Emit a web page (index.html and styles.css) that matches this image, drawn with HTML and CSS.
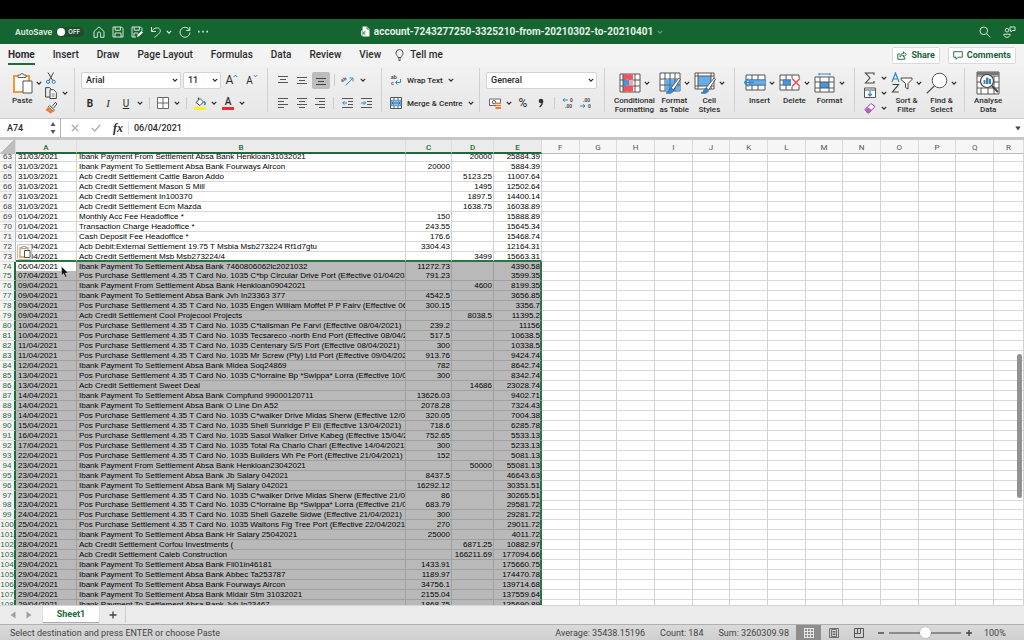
FILE: index.html
```html
<!DOCTYPE html>
<html lang="en">
<head>
<meta charset="utf-8">
<meta name="viewport" content="width=device-width, initial-scale=1">
<title>account-7243277250-3325210-from-20210302-to-20210401</title>
<link rel="stylesheet" href="styles.css">
</head>
<body>
<svg class="defs" aria-hidden="true">
  <symbol id="chev" viewBox="0 0 6 4"><path d="M.8.8 3 3.1 5.2.8" fill="none" stroke="currentColor" stroke-width="1.2"/></symbol>
  <symbol id="table" viewBox="0 0 22 20"><path d="M1 1h20v18H1z" fill="#fff"/><path d="M1 1h20v18H1zM1 7h20M1 13h20M6 1v18M11 1v18M16 1v18" fill="none" stroke="#555"/></symbol>
</svg>
<div class="topgap"></div>
<header class="titlebar">
  <div class="quick">
    <label class="autosave">AutoSave <input type="checkbox" class="hidden-box"><span class="switch"><i></i>OFF</span></label>
    <button aria-label="Home"><svg width="12" height="12" viewBox="0 0 12 12"><path d="M1 5.5 6 .8l5 4.7V11.300H7.600V7.500a1.600 1.600 0 0 0-3.200 0v3.800H1z"/></svg></button>
    <button aria-label="Save"><svg width="12" height="12" viewBox="0 0 12 12"><path d="M1 1h8.500L11 2.500V11H1zM3.200 1v3.200h5.200V1M3 11V7h6v4"/></svg></button>
    <button aria-label="Save as"><svg width="12" height="12" viewBox="0 0 12 12"><path d="M5 11H1V1h8.500L11 2.500V5M3.200 1v3.200h5.200V1M3 11V7h4"/><path d="m6 11 .6-2.500 4-3.500 1.400 1.600-4 3.700z" fill="#fff" stroke="none"/></svg></button>
    <button aria-label="Undo" class="undo"><svg width="12" height="12" viewBox="0 0 12 12"><path d="M1.500 1v4.500H6M1.500 5.500C4 1.500 8.500.8 10 3.500S8 8.500 4.500 11.500"/></svg><svg class="chev"><use href="#chev"/></svg></button>
    <button aria-label="Redo"><svg width="12" height="12" viewBox="0 0 12 12"><path d="M10.800 1v3.500H7.300M10.600 4.300A5 5 0 1 0 11 6.500"/></svg></button>
    <button aria-label="More"><svg class="dots" width="10" height="3" viewBox="0 0 10 3"><path d="M0 .8h1.600v1.600H0zM4.200.8h1.600v1.600H4.200zM8.400.8H10v1.600H8.400z"/></svg></button>
  </div>
  <h1><svg width="9" height="11" viewBox="0 0 9 11"><path d="M1.500.5h4.500l2.500 2.500v7.500h-7z" fill="#fff"/><path d="M0 4.500h5v5H0z" fill="#cfe3d6"/><path d="m1.200 5.500 2.600 3M3.800 5.500l-2.600 3M6 .5V3h2.500" stroke="#14682f" fill="none" stroke-width=".8"/></svg>account-7243277250-3325210-from-20210302-to-20210401<svg class="chev dim"><use href="#chev"/></svg></h1>
  <div class="right">
    <button aria-label="Search"><svg width="12" height="12" viewBox="0 0 12 12"><circle cx="4.800" cy="4.800" r="3.800"/><path d="m7.600 7.600 3.800 3.800"/></svg></button>
    <button aria-label="Share presence"><svg width="13" height="12" viewBox="0 0 13 12"><circle cx="4" cy="4.200" r="1.800"/><path d="M.8 8.200h6.400c0 4.200-6.400 4.200-6.400 0zM7 1h5v3.500H9.500L8 6V4.500H7z"/></svg></button>
  </div>
</header>
<nav class="tabs">
  <a href="#" class="on">Home</a><a href="#">Insert</a><a href="#">Draw</a><a href="#">Page Layout</a><a href="#">Formulas</a><a href="#">Data</a><a href="#">Review</a><a href="#">View</a>
  <a href="#" class="tell"><svg width="9" height="12" viewBox="0 0 9 12"><path d="M3 8.500C3 7 1 6.500 1 4a3.500 3.500 0 0 1 7 0c0 2.500-2 3-2 4.500zM3 10h3M3.500 11.500h2" fill="none" stroke="#444" stroke-width=".9"/></svg>Tell me</a>
  <div class="actions">
    <button class="share"><svg width="10" height="9" viewBox="0 0 10 9"><path d="M3 3H.8v5.300h7V6M3 6c0-2.500 1.500-3.500 3.500-3.500V.8L9.300 3.400 6.500 6V4.300C5 4.300 4 4.800 3 6z" fill="none" stroke="currentColor" stroke-width=".9"/></svg>Share</button>
    <button class="share"><svg width="10" height="9" viewBox="0 0 10 9"><path d="M.7.7h8.600v5.500H5L3 8.300V6.200H.7z" fill="none" stroke="currentColor" stroke-width=".9"/></svg>Comments</button>
  </div>
</nav>
<section class="ribbon" aria-label="Home ribbon">
  <div class="group clip">
    <button class="big paste"><span class="pic"><svg width="21" height="22" viewBox="0 0 21 22"><path d="M2 4h15v16H2z" fill="#fdfdfd" stroke="#eb9a3c" stroke-width="2"/><path d="M6 5V3h2.500a1.500 1.500 0 0 1 3 0H14v2.500H6z" fill="#fff" stroke="#666"/><path d="M11 9h9v12h-9z" fill="#fff" stroke="#555"/></svg><svg class="chev"><use href="#chev"/></svg></span>Paste</button>
    <div class="stack">
      <button aria-label="Cut"><svg width="12" height="12" viewBox="0 0 12 12" fill="none"><path d="M3 .5 8 9M8.500.5 3.800 9" stroke="#444"/><circle cx="3" cy="9.800" r="1.600" stroke="#2f86c9"/><circle cx="8.700" cy="9.800" r="1.600" stroke="#2f86c9"/></svg></button>
      <button aria-label="Copy"><svg width="12" height="12" viewBox="0 0 12 12"><path d="M5 10H.6V.6h4l1.500 1.500" fill="none" stroke="#444"/><path d="M5 2.700h3.500l2.800 2.800v6H5z" fill="#fff" stroke="#444"/><path d="M6.500 7h3M6.500 9h3" stroke="#777"/></svg><svg class="chev"><use href="#chev"/></svg></button>
      <button aria-label="Format painter"><svg width="12" height="12" viewBox="0 0 12 12"><path d="m7 4.500 3.500-4 1.500 1.300L8.500 6" fill="#fff" stroke="#444"/><path d="m4.500 3.500 5 4.500-1.300 1.300-5-4.500z" fill="#fff" stroke="#555"/><path d="m3 5 5 4.500L6 11.800.5 8z" fill="#e9803a"/></svg></button>
    </div>
  </div>
  <div class="group font">
    <div class="row">
      <span class="select fname"><select aria-label="Font"><option>Arial</option></select><svg class="chev"><use href="#chev"/></svg></span>
      <span class="select fsize"><select aria-label="Font size"><option>11</option></select><svg class="chev"><use href="#chev"/></svg></span>
      <button class="t" aria-label="Increase font size"><span class="grow">A</span><svg class="caret" viewBox="0 0 6 4"><path d="M.8 3.200 3 .9l2.200 2.300" fill="none" stroke="#3a8bc8" stroke-width="1.200"/></svg></button>
      <button class="t" aria-label="Decrease font size"><span class="shrink">A</span><svg class="caret"><use href="#chev"/></svg></button>
    </div>
    <div class="row">
      <button class="t bold">B</button><button class="t ital">I</button><button class="t und">U</button><button class="c" aria-label="Underline options"><svg class="chev"><use href="#chev"/></svg></button><hr>
      <button class="t" aria-label="Borders"><svg width="12" height="12" viewBox="0 0 12 12"><path d="M.5.5h11v11H.5zM6 .5v11M.5 6h11" fill="#fff" stroke="#666"/></svg></button><button class="c" aria-label="Border options"><svg class="chev"><use href="#chev"/></svg></button><hr>
      <button class="t" aria-label="Fill colour"><svg width="12" height="13" viewBox="0 0 12 13"><path d="M2 5.500 6 1.500l3.500 3.500L6 8.500z" fill="#fff" stroke="#444"/><path d="M4.500 3V.5M10 4.500c1.500 1.500 1.500 3 .3 3.300" stroke="#236ba8" stroke-width="1.300" fill="none"/><path d="M0 10h12v3H0z" fill="#fff02c"/></svg></button><button class="c" aria-label="Fill options"><svg class="chev"><use href="#chev"/></svg></button>
      <button class="t fontcol" aria-label="Font colour">A</button><button class="c" aria-label="Font colour options"><svg class="chev"><use href="#chev"/></svg></button>
    </div>
  </div>
  <div class="group align">
    <div class="row">
      <button class="t" aria-label="Top align"><svg width="10" height="9" viewBox="0 0 10 9"><path d="M0 .5h10M2 3.500h6M0 6.500h10" stroke="#555"/></svg></button>
      <button class="t" aria-label="Middle align"><svg width="10" height="9" viewBox="0 0 10 9"><path d="M0 1.500h10M2 4.500h6M0 7.500h10" stroke="#555"/></svg></button>
      <button class="t sel" aria-label="Bottom align"><svg width="10" height="9" viewBox="0 0 10 9"><path d="M0 2.500h10M2 5.500h6M0 8.500h10" stroke="#444"/></svg></button><hr>
      <button class="t" aria-label="Orientation"><svg width="14" height="12" viewBox="0 0 14 12"><text x="0" y="7" class="tiny" transform="rotate(-35 3 6)">ab</text><path d="m4.500 11.500 7-7M8.500 4h3.500v3.500" stroke="#3a8bc8" fill="none"/></svg></button><button class="c" aria-label="Orientation options"><svg class="chev"><use href="#chev"/></svg></button>
    </div>
    <div class="row">
      <button class="t" aria-label="Align left"><svg width="10" height="11" viewBox="0 0 10 11"><path d="M0 .5h10M0 3.500h6M0 6.500h10M0 9.500h6" stroke="#555"/></svg></button>
      <button class="t" aria-label="Centre"><svg width="10" height="11" viewBox="0 0 10 11"><path d="M0 .5h10M2 3.500h6M0 6.500h10M2 9.500h6" stroke="#555"/></svg></button>
      <button class="t" aria-label="Align right"><svg width="10" height="11" viewBox="0 0 10 11"><path d="M0 .5h10M4 3.500h6M0 6.500h10M4 9.500h6" stroke="#555"/></svg></button><hr>
      <button class="t" aria-label="Decrease indent"><svg width="11" height="11" viewBox="0 0 11 11"><path d="M0 .5h11M6 3.500h5M6 6.500h5M0 9.500h11" stroke="#555"/><path d="M5 5H.8M2.500 3.200.7 5l1.800 1.800" stroke="#2f86c9" fill="none"/></svg></button>
      <button class="t" aria-label="Increase indent"><svg width="11" height="11" viewBox="0 0 11 11"><path d="M0 .5h11M6 3.500h5M6 6.500h5M0 9.500h11" stroke="#555"/><path d="M0 5h4.500M2.800 3.200 4.600 5 2.800 6.800" stroke="#2f86c9" fill="none"/></svg></button>
    </div>
  </div>
  <div class="group wrap">
    <div class="row"><button class="text"><svg width="12" height="12" viewBox="0 0 12 12"><text x="1" y="5" class="tiny">ab</text><text x="1" y="11" class="tiny">c</text><path d="M10.500 5v3.500H6M7.500 6.500l-2 2 2 2" stroke="#2f86c9" fill="none"/></svg>Wrap Text<svg class="chev"><use href="#chev"/></svg></button></div>
    <div class="row"><button class="text"><svg width="12" height="12" viewBox="0 0 12 12"><path d="M.5.500h11v11H.5zM4 .5V3M8 .5V3M4 9v2.500M8 9v2.500" fill="#fff" stroke="#555"/><path d="M1 3.300h10v5.400H1z" fill="#8ec3ee" stroke="#2f76b5" stroke-width=".7"/><path d="M2 6h8M3.500 4.500 2 6l1.500 1.500M8.500 4.500 10 6 8.500 7.500" stroke="#1f5e96" fill="none" stroke-width=".8"/></svg>Merge &amp; Centre<svg class="chev"><use href="#chev"/></svg></button></div>
  </div>
  <div class="group number">
    <div class="row"><span class="select fmt"><select aria-label="Number format"><option>General</option></select><svg class="chev"><use href="#chev"/></svg></span></div>
    <div class="row">
      <button class="t" aria-label="Currency"><svg width="13" height="11" viewBox="0 0 13 11"><path d="M.5 1h11v6.500H.5z" fill="#fff" stroke="#666"/><circle cx="5" cy="4.200" r="1.700" fill="none" stroke="#555"/><path d="M6.500 4.500h5.500V11H6.500z" fill="#e9803a"/><path d="M7 6.500h5M7 8.500h5" stroke="#fff" stroke-width=".7"/></svg></button><button class="c" aria-label="Currency options"><svg class="chev"><use href="#chev"/></svg></button>
      <button class="t pct">%</button><button class="t comma" aria-label="Comma style"><svg width="6" height="10" viewBox="0 0 6 10"><circle cx="3" cy="3" r="2.300" fill="#333"/><path d="M4.600 3c0 2.500-.8 4.500-3 6" stroke="#333" stroke-width="1.300" fill="none"/></svg></button><hr>
      <button class="t" aria-label="Increase decimal"><svg width="12" height="12" viewBox="0 0 12 12"><text x="8" y="5" class="tiny">0</text><text x="3" y="11" class="tiny">.00</text><path d="M6 3H1M2.700 1.200.9 3l1.800 1.800" stroke="#2f86c9" fill="none"/></svg></button>
      <button class="t" aria-label="Decrease decimal"><svg width="12" height="12" viewBox="0 0 12 12"><text x="3" y="5" class="tiny">.00</text><text x="8" y="11" class="tiny">0</text><path d="M0 9h5M3.200 7.200 5 9l-1.800 1.800" stroke="#2f86c9" fill="none"/></svg></button>
    </div>
  </div>
  <div class="group styles">
    <button class="big"><span class="pic"><svg width="22" height="20" viewBox="0 0 22 20"><use href="#table"/><path d="M4 1.500h10v5H4zM4 13h10v5.500H4z" fill="#f2545b"/><path d="M4 7h6v5.500H4z" fill="#4795dc"/><path d="M10 7h4v5.500h-4z" fill="#f8a3a5"/><path d="M4 1v18" stroke="#555"/></svg><svg class="chev"><use href="#chev"/></svg></span>Conditional<br>Formatting</button>
    <button class="big"><span class="pic"><svg width="22" height="22" viewBox="0 0 22 22"><use href="#table" width="22" height="20"/><path d="M6.500 7.500h14v11h-14z" fill="#67ace8"/><path d="M6 13h15M11 7v12M16 7v12" stroke="#3574ac"/><path d="m12 16 8-10 1.500 1-7 11z" fill="#fff" stroke="#444" stroke-width=".8"/><path d="M7 21c3 0 2-4 5-5l2.500 2c0 3-4 4-7.500 3z" fill="#348bd6" stroke="#24659f" stroke-width=".7"/></svg><svg class="chev"><use href="#chev"/></svg></span>Format<br>as Table</button>
    <button class="big"><span class="pic"><svg width="22" height="22" viewBox="0 0 22 22"><path d="M1 1h19v16H1z" fill="#fff"/><path d="M4 4h13v10H4z" fill="#67ace8"/><path d="M1 1h19v16H1zM4 1v16M17 1v16M1 4h19M1 14h19" fill="none" stroke="#555"/><path d="m12 16 8-10 1.500 1-7 11z" fill="#fff" stroke="#444" stroke-width=".8"/><path d="M7 21c3 0 2-4 5-5l2.500 2c0 3-4 4-7.500 3z" fill="#348bd6" stroke="#24659f" stroke-width=".7"/></svg><svg class="chev"><use href="#chev"/></svg></span>Cell<br>Styles</button>
  </div>
  <div class="group cells">
    <button class="big"><span class="pic"><svg width="22" height="20" viewBox="0 0 22 20"><path d="M2 2h19v15H2z" fill="#fff"/><path d="M2 2h19v15H2zM2 7h19M2 12h19M8 2v15M14 2v15" fill="none" stroke="#555"/><path d="M5 7h17v5H5z" fill="#67ace8" stroke="#3574ac" stroke-width=".7"/><path d="M10 9.500H1M4.500 5.500l-4 4 4 4" fill="none" stroke="#2f86c9" stroke-width="1.300"/></svg><svg class="chev"><use href="#chev"/></svg></span>Insert</button>
    <button class="big"><span class="pic"><svg width="22" height="20" viewBox="0 0 22 20"><path d="M1 2h19v15H1z" fill="#fff"/><path d="M1 2h19v15H1zM1 7h19M1 12h19M7 2v15M13 2v15" fill="none" stroke="#555"/><path d="M4 7h8v5H4z" fill="#4795dc" stroke="#3574ac" stroke-width=".7"/><path d="M12 5h10v9H12z" fill="#f4f4f4"/><path d="m13 5.500 8 8M21 5.500l-8 8" stroke="#e8474b" stroke-width="1.300"/></svg><svg class="chev"><use href="#chev"/></svg></span>Delete</button>
    <button class="big"><span class="pic"><svg width="22" height="20" viewBox="0 0 22 20"><path d="M1 4h19v15H1z" fill="#fff"/><path d="M6 9h9v6H6z" fill="#4795dc"/><path d="M1 4h19v15H1zM1 9h19M1 15h19M6 4v15M15 4v15" fill="none" stroke="#555"/><path d="M5 1h11M5 0v2.500M16 0v2.500" stroke="#2f86c9"/></svg><svg class="chev"><use href="#chev"/></svg></span>Format</button>
  </div>
  <div class="group edit">
    <div class="stack">
      <button aria-label="AutoSum"><svg width="12" height="12" viewBox="0 0 12 12"><path d="M10 3V1H1.500L6 6l-4.500 5H10V9" fill="none" stroke="#444" stroke-width="1.100"/></svg><svg class="chev"><use href="#chev"/></svg></button>
      <button aria-label="Fill"><svg width="12" height="12" viewBox="0 0 12 12"><path d="M.5 1h11v9.500H.5zM.5 3h11" fill="#fff" stroke="#555"/><path d="M6 4v5M4 7l2 2 2-2" fill="none" stroke="#2f86c9" stroke-width="1.200"/></svg><svg class="chev"><use href="#chev"/></svg></button>
      <button aria-label="Clear"><svg width="12" height="12" viewBox="0 0 12 12"><path d="M1 7.500 7 1.500l4 3-6 6.500H3.500z" fill="#fff" stroke="#a03aa8"/><path d="M1 7.500 3.500 5 8 8l-3 3H3.500z" fill="#b565bb"/></svg><svg class="chev"><use href="#chev"/></svg></button>
    </div>
    <button class="big"><span class="pic"><svg width="22" height="22" viewBox="0 0 22 22"><path d="m1 10 3.500-9L8 10M2.300 7h4.500" fill="none" stroke="#2f86c9" stroke-width="1.200"/><path d="M1.500 12.500h6L1.500 20h6.300" fill="none" stroke="#444" stroke-width="1.200"/><path d="M10 6h11v1.500l-4 4V17l-2.500-1.500v-4L10 7.500z" fill="#fff" stroke="#444"/></svg><svg class="chev"><use href="#chev"/></svg></span>Sort &amp;<br>Filter</button>
    <button class="big"><span class="pic"><svg width="22" height="22" viewBox="0 0 22 22"><circle cx="13.500" cy="8.500" r="7.300" fill="#fff" stroke="#555"/><path d="M8.300 14 .8 21.200" stroke="#555" stroke-width="1.200"/></svg><svg class="chev"><use href="#chev"/></svg></span>Find &amp;<br>Select</button>
  </div>
  <div class="group last">
    <button class="big"><span class="pic"><svg width="24" height="24" viewBox="0 0 24 24"><path d="M1 1h22v22H1zM1 5h22M1 17h22M5 17v6M12 17v6M18 5v18M1 11h22" fill="#fff" stroke="#555"/><path d="M1 1h22v3H1z" fill="#777"/><circle cx="11" cy="10" r="6.500" fill="#fff" stroke="#444" stroke-width="1.200"/><path d="m16 15 6 6" stroke="#444" stroke-width="2"/><path d="M7.500 9h2v4h-2z" fill="#777"/><path d="M10 6.500h2.500V13H10zM13 8h2v5h-2z" fill="#2f86c9"/></svg></span>Analyse<br>Data</button>
  </div>
</section>
<section class="formula">
  <div class="namebox"><input aria-label="Name box" value="A74"><svg width="6" height="14" viewBox="0 0 6 14"><path d="M.5 5 3 1l2.500 4zM.5 9 3 13l2.500-4z" fill="#555"/></svg></div>
  <button aria-label="Cancel"><svg width="8" height="8" viewBox="0 0 8 8"><path d="m.8.8 6.400 6.400M7.200.8.8 7.200" stroke="#b0b0b0" stroke-width="1.400"/></svg></button>
  <button aria-label="Enter"><svg width="10" height="8" viewBox="0 0 10 8"><path d="m.8 4 3 3L9.200.8" fill="none" stroke="#b0b0b0" stroke-width="1.400"/></svg></button>
  <button class="fx">fx</button>
  <input class="fvalue" aria-label="Formula bar" value="06/04/2021">
  <button aria-label="Expand formula bar" class="expand"><svg width="6" height="5" viewBox="0 0 6 5"><path d="M.3.5h5.400L3 4.500z" fill="#444"/></svg></button>
</section>
<main class="sheet">
  <table>
    <thead><tr id="head"></tr></thead>
    <tbody id="rows"></tbody>
  </table>
  <button class="pasteopt" aria-label="Paste options"><svg width="12" height="12" viewBox="0 0 12 12"><path d="M1 1.800h8V11H1z" fill="#fff" stroke="#e79740" stroke-width="1.300"/><path d="M3 .7h4v2H3z" fill="#fff" stroke="#777" stroke-width=".7"/><path d="M5.500 4.500h5.500v7H5.500z" fill="#fff" stroke="#555"/></svg></button>
  <svg class="cursor" width="8" height="12" viewBox="0 0 8 12"><path d="M.5.500v9L2.700 7.600l1.500 3.700 1.600-.7-1.500-3.500h3z" fill="#111" stroke="#ddd" stroke-width=".5"/></svg>
  <div class="thumb"></div>
</main>
<footer>
  <div class="sheets">
    <button aria-label="Previous sheet"><svg width="6" height="8" viewBox="0 0 6 8"><path d="M5.500.5v7L.5 4z" fill="#a0a0a0"/></svg></button>
    <button aria-label="Next sheet"><svg width="6" height="8" viewBox="0 0 6 8"><path d="M.5.500v7l5-3.500z" fill="#a0a0a0"/></svg></button>
    <button class="tab">Sheet1</button>
    <button class="add" aria-label="Add sheet"><svg width="8" height="8" viewBox="0 0 8 8"><path d="M4 .5v7M.5 4h7" stroke="#444" stroke-width="1.300"/></svg></button>
  </div>
  <div class="status">
    <span class="msg">Select destination and press ENTER or choose Paste</span>
    <span>Average: 35438.15196</span><span>Count: 184</span><span>Sum: 3260309.98</span>
    <div class="views">
      <button class="on" aria-label="Normal view"><svg width="10" height="10" viewBox="0 0 10 10"><path d="M.5 0v10M3.500 0v10M6.500 0v10M9.500 0v10M0 .5h10M0 3.500h10M0 6.500h10M0 9.500h10" stroke="#eee" stroke-width=".9"/></svg></button>
      <button aria-label="Page layout"><svg width="10" height="10" viewBox="0 0 10 10"><path d="M.5.500h9v9h-9zM2.500 1.500h5v7h-5zM3.500 3.500h3M3.500 5h3M3.500 6.500h3" fill="none" stroke="#555" stroke-width=".8"/></svg></button>
      <button aria-label="Page break preview"><svg width="10" height="10" viewBox="0 0 10 10"><path d="M.5.500h9v9h-9zM3.500.5v5M6.500.5v5M.5 5.500h6" fill="none" stroke="#555"/></svg></button>
    </div>
    <div class="zoom"><button aria-label="Zoom out"><svg width="6" height="6" viewBox="0 0 6 6"><path d="M0 3h6" stroke="#444" stroke-width="1.400"/></svg></button><input type="range" aria-label="Zoom" min="0" max="200" value="100"><button aria-label="Zoom in"><svg width="6" height="6" viewBox="0 0 6 6"><path d="M0 3h6M3 0v6" stroke="#444" stroke-width="1.400"/></svg></button></div>
    <span class="pc">100%</span>
  </div>
</footer>
<script src="sheet.js"></script>
</body>
</html>
```
FILE: styles.css
```css
* { box-sizing: border-box; }
body { margin: 0; height: 100vh; display: flex; flex-direction: column; overflow: hidden; font: 500 8px/9px Roboto, "Liberation Sans", sans-serif; color: #2b2b2b; background: #fff; }
button, input, select { font: inherit; color: inherit; border: 0; padding: 0; margin: 0; background: none; }
button { display: flex; align-items: center; justify-content: center; white-space: nowrap; }
svg { flex: none; display: block; }
.defs { position: absolute; width: 0; height: 0; }
.chev { width: 6px; height: 4px; }
.tiny { font: 600 5px "Liberation Sans", sans-serif; fill: #444; }
.topgap { height: 19px; background: #000; }

.titlebar { height: 25px; background: #14652f; color: #e6f0e9; display: grid; grid-template-columns: 1fr auto 1fr; align-items: center; }
.titlebar button > svg:not(.chev) { fill: none; stroke: #d5e6da; stroke-width: 1; }
.titlebar button > .dots:not(.chev) { fill: #d5e6da; stroke: none; }
.quick { display: flex; align-items: center; gap: 7px; padding-left: 15px; }
.autosave { display: flex; align-items: center; gap: 4px; margin-right: 2px; font: 600 8px/10px Inter, sans-serif; }
.hidden-box { position: absolute; opacity: 0; }
.switch { width: 28px; height: 10px; border-radius: 5px; background: #234a30; display: flex; align-items: center; gap: 3px; padding: 0 1px; font-size: 6px; }
.switch i { width: 8px; height: 8px; border-radius: 50%; background: #fff; }
.undo { gap: 4px; }
h1 { margin: 0; font-size: 10px; line-height: 12px; font-weight: 700; display: flex; align-items: center; gap: 4px; }
.dim { opacity: .4; }
.right { display: flex; justify-content: flex-end; gap: 12px; padding-right: 8px; }

.tabs { height: 22px; display: flex; align-items: center; gap: 18px; padding: 0 8px; background: #f3f3f3; font-size: 10px; line-height: 12px; }
.tabs a { color: #2b2b2b; text-decoration: none; height: 20px; padding-top: 4px; }
.tabs .on { font-weight: 700; border-bottom: 2px solid #1d6b3a; }
.tabs .tell { display: flex; gap: 6px; margin: 0 auto 0 -4px; }
.actions { display: flex; gap: 8px; }
.share { height: 17px; gap: 4px; padding: 0 4px; background: #fff; border: 1px solid #dadada; border-radius: 2px; color: #1c6338; font-size: 9px; font-weight: 700; }

.ribbon { height: 53px; display: flex; padding: 2px 0 6px; background: linear-gradient(#f1f1f1, #e7e7e7); border-bottom: 1px solid #c9c9c9; }
.group { border-right: 1px solid #d0d0d0; padding: 3px 6px 0; flex: none; }
.row { display: flex; align-items: center; height: 18px; margin-bottom: 5px; }
.row hr { border: 0; width: 1px; height: 12px; background: #ccc; margin: 0 4px; }
.t { width: 18px; height: 17px; }
.c { width: 10px; height: 16px; }
.big { flex-direction: column; justify-content: flex-start; text-align: center; line-height: 9px; }
.pic { display: flex; align-items: center; gap: 3px; height: 24px; flex: none; margin-bottom: 1px; }
.stack { display: flex; flex-direction: column; justify-content: space-between; height: 43px; }
.stack button { gap: 5px; justify-content: flex-start; height: 13px; }
.clip { width: 75px; display: flex; gap: 3px; }
.clip .big { padding-left: 6px; }
.clip .paste { align-items: flex-start; }
.font { width: 193px; }
.font .row:first-child { gap: 2px; }
.select { display: grid; align-items: center; }
.select > * { grid-area: 1 / 1; }
.select select { appearance: none; width: 100%; height: 17px; padding: 0 4px; background: #fff; border: 1px solid #d2d2d2; border-radius: 2px; font-size: 9px; line-height: 12px; }
.select .chev { justify-self: end; margin-right: 3px; }
.fname { width: 100px; }
.fsize { width: 38px; }
.grow { font-size: 12px; font-weight: 400; }
.shrink { font-size: 10px; font-weight: 400; }
.caret { width: 5px; height: 4px; align-self: flex-start; margin-top: 2px; color: #3a8bc8; }
.bold { font-size: 10px; font-weight: 700; }
.ital { font: italic 11px "Liberation Serif", serif; }
.und { font-size: 10px; font-weight: 400; text-decoration: underline; }
.t.fontcol { width: 12px; height: 13px; margin: 0 3px; border-bottom: 3px solid #f3262c; font-size: 10px; line-height: 10px; }
.align { width: 114px; }
.align .row { gap: 1px; }
.align .row hr { margin: 0 3px; }
.sel { background: #bdbdbd; border-radius: 2px; }
.wrap { width: 98px; }
.text { gap: 5px; padding-left: 2px; }
.number { width: 125px; }
.fmt { width: 111px; }
.pct { font-size: 12px; font-weight: 400; }
.styles { width: 130px; display: flex; gap: 4px; padding-left: 9px; }
.cells { width: 120px; display: flex; gap: 4px; padding-left: 9px; }
.edit { width: 110px; display: flex; gap: 4px; padding-left: 9px; }
.last { flex: 1; border: 0; display: flex; padding-left: 9px; }

.formula { height: 21px; display: flex; align-items: center; background: #fff; border-bottom: 3px solid #c6c6c6; font-size: 9px; line-height: 12px; }
.namebox { width: 61px; height: 18px; padding: 0 4px 0 7px; display: flex; align-items: center; border-right: 1px solid #b5b5b5; margin-right: 10px; }
.namebox input { width: 100%; min-width: 0; flex: 1; }
.formula button { margin-right: 12px; }
.formula .fx { font: italic bold 12px "Liberation Serif", serif; margin-right: 5px; }
.fvalue { flex: 1; border-left: 1px solid #ddd; padding-left: 5px; }
.formula .expand { margin-right: 3px; }

.sheet { flex: 1; min-height: 0; position: relative; overflow: hidden; font: 8px/9px "Liberation Sans", Arial, sans-serif; color: #000; }
table { display: flex; flex-direction: column; height: 100%; }
tr { display: grid; grid-template-columns: 16px 61px 329px 46px 42px 48px repeat(12, 1fr) 30px; min-height: 0; }
thead { z-index: 1; }
thead tr { height: 14px; background: #f6f6f6; }
thead th { padding: 3px 0 0; font: 8px/9px Roboto, sans-serif; color: #555; border-right: 1px solid #dcdcdc; border-bottom: 1px solid #bbb; }
thead .hot { background: #ebebeb; color: #1d6b3a; border-bottom: 2px solid #1d6b3a; font-weight: 500; }
.corner { background: linear-gradient(135deg, #f0f0f0 50%, #bdbdbd 50%); }
tbody { flex: 1; min-height: 0; display: grid; grid-auto-rows: minmax(0, 1fr); margin: -2px 0 -5px; }
tbody th { font: 8px/9px "Liberation Sans", sans-serif; text-align: center; padding: 0; color: #444; background: #f4f4f4; border-right: 1px solid #bbb; border-bottom: 1px solid #dedede; white-space: nowrap; }
td { padding: 0 1px 0 2px; border-right: 1px solid #d2d2d2; border-bottom: 1px solid #d8d8d8; white-space: nowrap; overflow: hidden; }
.n { text-align: right; }
.picked td:nth-child(-n+6) { background: #b9b9b9; border-color: #a0a0a0; }
.picked th { color: #1d6b3a; border-right: 2px solid #1d6b3a; }
.picked td.edge:nth-child(6) { border-right: 2px solid #2a7345; padding-right: 0; }
.picked td.active:nth-child(2) { background: #fff; }
.above td:nth-child(-n+6) { border-bottom: 2px solid #2a7345; }
.pasteopt { position: absolute; left: 17px; top: 104px; width: 15px; height: 16px; background: #f4f4f4; border: 1px solid #c4c4c4; border-radius: 2px; }
.cursor { position: absolute; left: 61px; top: 126px; }
.thumb { position: absolute; right: 2px; top: 46%; width: 5px; height: 31%; border-radius: 3px; background: #929292; }

.sheets { height: 19px; display: flex; align-items: flex-start; background: #ebebeb; border-top: 1px solid #d5d5d5; padding-left: 10px; }
.sheets button { height: 17px; width: 6px; margin-right: 10px; }
.sheets .tab { width: 56px; height: 16px; margin: 0 10px 0 1px; background: #fff; color: #1d6b3a; font-size: 9px; font-weight: 700; box-shadow: 0 1px 1px #aaa; }
.sheets .add { width: 17px; border-right: 1px solid #ccc; padding-right: 9px; }
.status { height: 16px; display: flex; align-items: center; background: linear-gradient(#dadada, #cfcfcf); border-top: 1px solid #b0b0b0; padding-left: 10px; font-size: 9px; font-weight: 400; line-height: 12px; color: #444; gap: 15px; white-space: nowrap; }
.msg { margin-right: auto; }
.views { display: flex; align-self: stretch; margin-left: -8px; }
.views button { width: 25px; }
.views .on { background: #8d8d8d; }
.zoom { display: flex; align-items: center; gap: 5px; margin-left: -8px; }
.zoom input { appearance: none; width: 72px; height: 12px; background: linear-gradient(#8c8c8c, #8c8c8c) center / 100% 2px no-repeat; }
.zoom input::-webkit-slider-thumb { appearance: none; width: 11px; height: 11px; border-radius: 50%; background: #fff; box-shadow: 0 0 1px #777; }
.pc { width: 40px; margin-left: -3px; }
```
FILE: sheet.js
```js
const P = 'Pos Purchase Settlement 4.35 T Card No. 1035 ';
const T = 'Ibank Payment To Settlement Absa Bank ';
const F = 'Ibank Payment From Settlement Absa Bank ';
const A = 'Acb Credit Settlement ';
const FIRST = 63, SELECTED = 74;
const data = [
['31/03/2021', F + 'Henkloan31032021', '', '20000', '25884.39'],
['31/03/2021', T + 'Fourways Aircon', '20000', '', '5884.39'],
['31/03/2021', A + 'Cattle Baron Addo', '', '5123.25', '11007.64'],
['31/03/2021', A + 'Mason S Mill', '', '1495', '12502.64'],
['31/03/2021', A + 'In100370', '', '1897.5', '14400.14'],
['31/03/2021', A + 'Ecm Mazda', '', '1638.75', '16038.89'],
['01/04/2021', 'Monthly Acc Fee Headoffice *', '150', '', '15888.89'],
['01/04/2021', 'Transaction Charge Headoffice *', '243.55', '', '15645.34'],
['01/04/2021', 'Cash Deposit Fee Headoffice *', '176.6', '', '15468.74'],
['01/04/2021', 'Acb Debit:External Settlement 19.75 T Msbia Msb273224 Rf1d7gtu', '3304.43', '', '12164.31'],
['01/04/2021', A + 'Msb Msb273224/4', '', '3499', '15663.31'],
['06/04/2021', T + '7460806062lc2021032', '11272.73', '', '4390.58'],
['07/04/2021', P + 'C*bp Circular Drive Port (Effective 01/04/2021)', '791.23', '', '3599.35'],
['09/04/2021', F + 'Henkloan09042021', '', '4600', '8199.35'],
['09/04/2021', T + 'Jvh In23363 377', '4542.5', '', '3656.85'],
['09/04/2021', P + 'Engen William Moffet P P Fairv (Effective 06/04/2021)', '300.15', '', '3356.7'],
['09/04/2021', A + 'Cool Projecool Projects', '', '8038.5', '11395.2'],
['10/04/2021', P + 'C*talisman Pe Farvi (Effective 08/04/2021)', '239.2', '', '11156'],
['10/04/2021', P + 'Tecsareco -north End Port (Effective 08/04/2021)', '517.5', '', '10638.5'],
['11/04/2021', P + 'Centenary S/S Port (Effective 08/04/2021)', '300', '', '10338.5'],
['11/04/2021', P + 'Mr Screw (Pty) Ltd Port (Effective 09/04/2021)', '913.76', '', '9424.74'],
['12/04/2021', T + 'Midea Soq24869', '782', '', '8642.74'],
['13/04/2021', P + 'C*lorraine Bp *Swippa* Lorra (Effective 10/04/2021)', '300', '', '8342.74'],
['13/04/2021', A + 'Sweet Deal', '', '14686', '23028.74'],
['14/04/2021', T + 'Compfund 99000120711', '13626.03', '', '9402.71'],
['14/04/2021', T + 'O Line Dn A52', '2078.28', '', '7324.43'],
['14/04/2021', P + 'C*walker Drive Midas Sherw (Effective 12/04/2021)', '320.05', '', '7004.38'],
['15/04/2021', P + 'Shell Sunridge P Eli (Effective 13/04/2021)', '718.6', '', '6285.78'],
['16/04/2021', P + 'Sasol Walker Drive Kabeg (Effective 15/04/2021)', '752.65', '', '5533.13'],
['17/04/2021', P + 'Total Ra Charlo Charl (Effective 14/04/2021)', '300', '', '5233.13'],
['22/04/2021', P + 'Builders Wh Pe Port (Effective 21/04/2021)', '152', '', '5081.13'],
['23/04/2021', F + 'Henkloan23042021', '', '50000', '55081.13'],
['23/04/2021', T + 'Jb Salary 042021', '8437.5', '', '46643.63'],
['23/04/2021', T + 'Mj Salary 042021', '16292.12', '', '30351.51'],
['23/04/2021', P + 'C*walker Drive Midas Sherw (Effective 21/04/2021)', '86', '', '30265.51'],
['23/04/2021', P + 'C*lorraine Bp *Swippa* Lorra (Effective 21/04/2021)', '683.79', '', '29581.72'],
['24/04/2021', P + 'Shell Gazelle Sidwe (Effective 21/04/2021)', '300', '', '29281.72'],
['25/04/2021', P + 'Waltons Fig Tree Port (Effective 22/04/2021)', '270', '', '29011.72'],
['25/04/2021', T + 'Hr Salary 25042021', '25000', '', '4011.72'],
['28/04/2021', A + 'Corfou Investments (', '', '6871.25', '10882.97'],
['28/04/2021', A + 'Caleb Construction', '', '166211.69', '177094.66'],
['29/04/2021', T + 'Fil01in46181', '1433.91', '', '175660.75'],
['29/04/2021', T + 'Abbec Ta253787', '1189.97', '', '174470.78'],
['29/04/2021', T + 'Fourways Aircon', '34756.1', '', '139714.68'],
['29/04/2021', T + 'Midair Stm 31032021', '2155.04', '', '137559.64'],
['29/04/2021', T + 'Jvh In23467', '1868.75', '', '135690.89']
];
const letters = 'ABCDEFGHIJKLMNOPQR'.split('');
document.getElementById('head').innerHTML = '<th class="corner"></th>' +
  letters.map((l, i) => `<th scope="col" class="${i < 5 ? 'hot' : ''}">${l}</th>`).join('');
document.getElementById('rows').innerHTML = data.map((r, i) => {
  const num = FIRST + i;
  const row = num >= SELECTED ? 'picked' : num === SELECTED - 1 ? 'above' : '';
  const cells = letters.map((l, c) => {
    const cls = [c > 1 && c < 5 ? 'n' : '', c === 4 ? 'edge' : '', c === 0 && num === SELECTED ? 'active' : ''].join(' ').trim();
    return `<td class="${cls}">${r[c] || ''}</td>`;
  }).join('');
  return `<tr class="${row}"><th scope="row">${num}</th>${cells}</tr>`;
}).join('');
```
